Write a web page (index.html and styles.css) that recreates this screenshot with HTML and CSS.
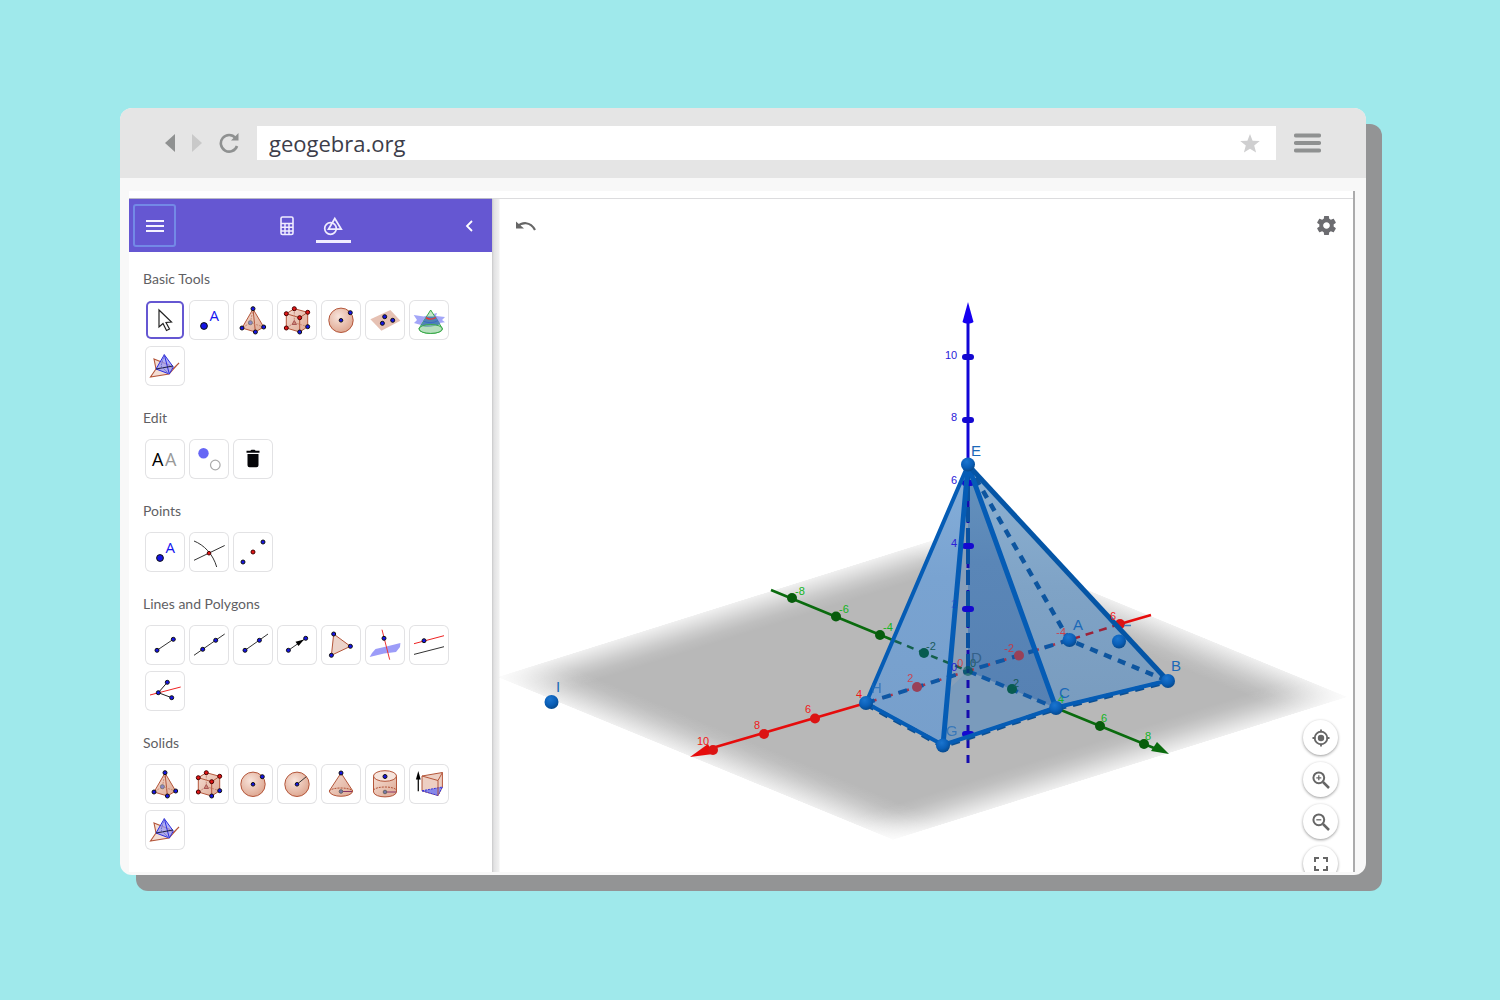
FILE: index.html
```html
<!DOCTYPE html>
<html lang="en">
<head>
<meta charset="utf-8">
<title>geogebra.org</title>
<meta name="viewport" content="width=device-width, initial-scale=1">
<link rel="stylesheet" href="styles.css">
</head>
<body>
<svg class="defs" width="0" height="0" aria-hidden="true">
  <defs>
    <linearGradient id="skin" x1="0" y1="0" x2="1" y2="1"><stop offset="0" stop-color="#f5ddd2"/><stop offset="1" stop-color="#dda893"/></linearGradient>
    <radialGradient id="ball" cx=".4" cy=".35" r=".65"><stop offset="0" stop-color="#f8e4db"/><stop offset="1" stop-color="#dfa993"/></radialGradient>
    <symbol id="i-move" viewBox="0 0 38 38"><path d="M13 9v17l4-3.500 3.500 7 3-1.500L20 21.500l5.500-.5z" fill="#fff" stroke="#222" stroke-width="1.200"/></symbol>
    <symbol id="i-point" viewBox="0 0 38 38"><circle class="b" cx="14" cy="25" r="3.400"/><text x="19.500" y="19.500" class="pt-a">A</text></symbol>
    <symbol id="i-pyramid" viewBox="0 0 38 38"><path d="M19 8L8 27l13.400 4 8.300-5z" fill="url(#skin)" stroke="#b4563a"/><path d="M19 8l2.400 23" stroke="#b4563a" fill="none"/><path d="M19 8l-2.600 13.700L8 27m8.400-5.300L29.700 26" stroke="#c98a75" fill="none" stroke-dasharray="2 1"/><circle cx="16.400" cy="21.700" r="2" fill="#8d86c8" stroke="#777"/><g class="b"><circle cx="19" cy="7.700" r="2"/><circle cx="8" cy="27" r="2"/><circle cx="21.400" cy="31" r="2"/><circle cx="29.700" cy="26" r="2"/></g></symbol>
    <symbol id="i-cube" viewBox="0 0 38 38"><path d="M8.300 12.700l8-5 13.400 3.600v14.400l-8 5.300-13.400-4z" fill="url(#skin)" stroke="#b4563a"/><path d="M8.300 12.700l13.400 4 8-5.400M21.700 16.700V31" fill="none" stroke="#b4563a"/><path d="M16.300 7.700v14l-8 5.300m8-5.300l13.400 4" fill="none" stroke="#c98a75" stroke-dasharray="2 1"/><path d="M16.300 19.500l2.200 4h-4.400z" fill="#c98a75" stroke="#a55"/><g class="r"><circle cx="16.300" cy="7.700" r="2"/><circle cx="8.300" cy="12.700" r="2"/><circle cx="29.700" cy="11.300" r="2"/><circle cx="21.700" cy="16.700" r="2"/><circle cx="8.300" cy="27" r="2"/></g><g class="b"><circle cx="29.700" cy="25.700" r="2"/><circle cx="21.700" cy="31" r="2"/></g></symbol>
    <symbol id="i-sphere" viewBox="0 0 38 38"><circle cx="19" cy="19.300" r="12.200" fill="url(#ball)" stroke="#b4563a"/><g class="b"><circle cx="19" cy="19.300" r="1.800"/><circle cx="28.300" cy="11.700" r="2"/></g></symbol>
    <symbol id="i-radius" viewBox="0 0 38 38"><circle cx="19" cy="19.300" r="12.200" fill="url(#ball)" stroke="#b4563a"/><path d="M19 19.300l9.300-7.600" stroke="#333"/><circle class="b" cx="19" cy="19.300" r="1.800"/></symbol>
    <symbol id="i-plane" viewBox="0 0 38 38"><path d="M4.400 18.300l20-9.300 10 10.700-19 10z" fill="#e6c1b3"/><g class="b"><circle cx="18.700" cy="15.700" r="2"/><circle cx="26.700" cy="19.300" r="2"/><circle cx="16.400" cy="22.300" r="2"/></g></symbol>
    <symbol id="i-section" viewBox="0 0 38 38"><path d="M3.700 14l10 1.500L27 12l-1 3 9 1-3 3 3 2.200-9.700 1.300L13 27l-2-3-7-2 3-3z" fill="#a3a6f8"/><path d="M20.700 9L9 27.500c0 6.500 23.400 6.500 23.400 0z" fill="#c3e6c8" stroke="#3bab4b"/><path d="M16.500 15.500L11 24.500c6 3 13 1 19.300-1.500l-4.500-7.500z" fill="#4f83b4"/><path d="M13.500 20c5 2.500 10 2 14.500-.5" fill="none" stroke="#3a66c8"/><ellipse cx="20.700" cy="28" rx="11.700" ry="4.500" fill="#a9d8b2" fill-opacity=".5" stroke="#3bab4b"/><path d="M16 16.700c3 2 7 1.500 10-.2" fill="none" stroke="#e33" stroke-width="1.400"/></symbol>
    <symbol id="i-net" viewBox="0 0 38 38"><path d="M8 12l15 6 4 4 6-6-10 11-18.500 3L10 22z" fill="#f3ddd4" stroke="#b4563a" stroke-width="1.100"/><path d="M18.300 7.700L10 22l13.300 5 4-7z" fill="#9898f2" fill-opacity=".75" stroke="#2b2be0"/><path d="M18.300 7.700l5 19.300" stroke="#2b2be0"/><path d="M10 22l17-3" stroke="#224" stroke-width="1.200"/><path d="M18.300 7.700L15 19l8 8" stroke="#66c" fill="none" stroke-dasharray="2 1"/></symbol>
    <symbol id="i-labels" viewBox="0 0 38 38"><text x="6" y="25.500" class="aa">A</text><text x="19" y="25.500" class="aa dim">A</text></symbol>
    <symbol id="i-show" viewBox="0 0 38 38"><circle cx="13.500" cy="13.200" r="5.200" fill="#6666f5"/><circle cx="25.300" cy="25" r="4.800" fill="#fff" stroke="#aaa" stroke-width="1.200"/></symbol>
    <symbol id="i-trash" viewBox="0 0 38 38"><path d="M12.500 10.800h3.800l1.200-1h3l1.200 1h3.800v2h-13zM13.500 14h11v11.300a2 2 0 0 1-2 2h-7a2 2 0 0 1-2-2z" fill="#050508"/></symbol>
    <symbol id="i-intersect" viewBox="0 0 38 38"><path d="M4 8c10 4 19 13 22.700 26M4 27.300l30.700-14.800" fill="none" stroke="#333"/><circle class="r" cx="19" cy="20.200" r="1.800"/></symbol>
    <symbol id="i-mid" viewBox="0 0 38 38"><g class="b"><circle cx="9" cy="29" r="2"/><circle cx="29" cy="9" r="2"/></g><circle class="r" cx="19" cy="19" r="2"/></symbol>
    <symbol id="i-seg" viewBox="0 0 38 38"><path d="M11 24.300l16.300-11" stroke="#333"/><g class="b"><circle cx="11" cy="24.300" r="2"/><circle cx="27.300" cy="13.300" r="2"/></g></symbol>
    <symbol id="i-line" viewBox="0 0 38 38"><path d="M4 29.300L34.700 8" stroke="#333"/><g class="b"><circle cx="12.700" cy="23.300" r="2"/><circle cx="25.700" cy="14.300" r="2"/></g></symbol>
    <symbol id="i-ray" viewBox="0 0 38 38"><path d="M11 24.300L34 8" stroke="#333"/><g class="b"><circle cx="11" cy="24.300" r="2"/><circle cx="25.400" cy="14.300" r="2"/></g></symbol>
    <symbol id="i-vector" viewBox="0 0 38 38"><path d="M10.400 24.300l17.300-12" stroke="#333"/><path d="M26 13.500l-8.500 2.300 3 4.200z"/><g class="b"><circle cx="10.400" cy="24.300" r="2"/><circle cx="27.700" cy="12.300" r="2"/></g></symbol>
    <symbol id="i-poly" viewBox="0 0 38 38"><path d="M11.700 8l16.700 12.300-19 9z" fill="#ecd3c9" stroke="#b4563a"/><g class="b"><circle cx="11.700" cy="8" r="2"/><circle cx="28.400" cy="20.300" r="2"/><circle cx="9.400" cy="29.300" r="2"/></g></symbol>
    <symbol id="i-perp" viewBox="0 0 38 38"><path d="M3.700 31l2.300-4 3.500-4 11-2.500L34.400 17l-.4 4-4 5-12 1.500z" fill="#9c9cf8"/><path d="M16 3.700l7.700 30" stroke="#e33"/><circle class="b" cx="18" cy="12.300" r="2"/></symbol>
    <symbol id="i-parallel" viewBox="0 0 38 38"><path d="M4 17.700l30-8" stroke="#e22"/><path d="M4 28.400l30-7.700" stroke="#333"/><circle class="b" cx="14" cy="14.700" r="2"/></symbol>
    <symbol id="i-bisect" viewBox="0 0 38 38"><path d="M4 23l30.700-8" stroke="#e22"/><path d="M21.300 10.300l-9 10.400 13.400 5" fill="none" stroke="#222"/><g class="b"><circle cx="12.300" cy="20.700" r="2"/><circle cx="21.300" cy="10.300" r="2"/><circle cx="25.700" cy="25.700" r="2"/></g></symbol>
    <symbol id="i-cone" viewBox="0 0 38 38"><path d="M19 8L7.200 26c1 7 22.600 7 23.600 0z" fill="url(#skin)" stroke="#b4563a"/><path d="M7.200 26c3-4 20-4 23.600 0" fill="none" stroke="#b4563a" stroke-dasharray="2 1"/><path d="M19 26.500h11" stroke="#836"/><circle cx="19" cy="26.500" r="1.800" fill="#77a" stroke="#666"/><circle class="b" cx="19" cy="8" r="2"/></symbol>
    <symbol id="i-cyl" viewBox="0 0 38 38"><path d="M7.500 11v16c1 6.500 22 6.500 23 0V11z" fill="url(#skin)" stroke="#b4563a"/><ellipse cx="19" cy="11" rx="11.500" ry="5.300" fill="#f6e4dc" stroke="#b4563a"/><path d="M7.500 25c3-4 20-4 23 0" fill="none" stroke="#b4563a" stroke-dasharray="2 1"/><path d="M19 27h11" stroke="#836"/><circle cx="19" cy="27" r="1.800" fill="#77a" stroke="#666"/><circle class="b" cx="19" cy="11.500" r="2"/></symbol>
    <symbol id="i-extrude" viewBox="0 0 38 38"><path d="M8.300 26.200V12" stroke="#111" stroke-width="1.300"/><path d="M8.300 6l2.400 8.500H5.900z"/><path d="M12 11l20.400-3.500V22L28 30.500l-16-4.700z" fill="#edcfc3" stroke="#b4563a"/><path d="M12 25.800L32.400 22 28 30.500z" fill="#8787e8" stroke="#33d" stroke-dasharray="2 1"/><path d="M12 11l16 4.500 4.400-8M28 15.500v15" fill="none" stroke="#b4563a"/></symbol>
  </defs>
</svg>

<main class="window">
  <header class="chrome">
    <nav class="nav" aria-label="History">
      <button class="nav-btn" aria-label="Back"><svg width="10" height="18" viewBox="0 0 10 18"><path d="M10 0v18L0 9z" fill="#8f9191"/></svg></button>
      <button class="nav-btn" aria-label="Forward"><svg width="10" height="18" viewBox="0 0 10 18"><path d="M0 0v18l10-9z" fill="#c9c9c9"/></svg></button>
      <button class="nav-btn" aria-label="Reload"><svg width="20" height="20" viewBox="0 0 20 20"><path d="M16.500 5A8.300 8.300 0 1 0 18 13" fill="none" stroke="#8f9191" stroke-width="2.600"/><path d="M19.500 0v7.500H12z" fill="#8f9191"/></svg></button>
    </nav>
    <div class="address">
      <input class="url" type="text" value="geogebra.org" aria-label="Address">
      <button class="nav-btn" aria-label="Bookmark"><svg width="20" height="19" viewBox="0 0 20 19"><path d="M10 0l2.600 6.700 7.200.4-5.600 4.500 1.900 7L10 14.700l-6.100 3.900 1.900-7L.2 7.100l7.200-.4z" fill="#cfcfd0"/></svg></button>
    </div>
    <button class="nav-btn" aria-label="Browser menu"><svg width="27" height="20" viewBox="0 0 27 20"><path d="M2 2.500h23M2 10h23M2 17.500h23" stroke="#8f9191" stroke-width="4.200" stroke-linecap="round"/></svg></button>
  </header>

  <div class="page">
    <div class="app">
      <aside class="sidebar">
        <div class="tabs">
          <button class="menu" aria-label="Menu"><svg width="18" height="14" viewBox="0 0 18 14"><path d="M0 2h18M0 7h18M0 12h18" stroke="#f4f2ff" stroke-width="2"/></svg></button>
          <div class="tab-group">
            <button class="tab" aria-label="Algebra"><svg width="14" height="20" viewBox="0 0 14 20"><rect x="1" y="1" width="12" height="17.500" rx="1.500" fill="none" stroke="#f0edff" stroke-width="1.600"/><path d="M1 7.500h12M1 11.200h12M1 14.900h12M5 7.500v11M9 7.500v11" stroke="#f0edff" stroke-width="1.500"/></svg></button>
            <button class="tab active" aria-label="Tools"><svg width="20" height="20" viewBox="0 0 20 20"><g fill="none" stroke="#f0edff" stroke-width="1.700"><circle cx="7.500" cy="12.500" r="5.800"/><path d="M11.800 2.500l6.500 10.700H5.500z"/></g></svg></button>
          </div>
          <button class="collapse" aria-label="Collapse"><svg width="8" height="12" viewBox="0 0 8 12"><path d="M7 1L2 6l5 5" fill="none" stroke="#fff" stroke-width="1.800"/></svg></button>
        </div>
        <div class="sections">
          <section><h2>Basic Tools</h2><div class="tools">
            <button class="tool selected" aria-label="Move"><svg><use href="#i-move"/></svg></button>
            <button class="tool" aria-label="Point"><svg><use href="#i-point"/></svg></button>
            <button class="tool" aria-label="Pyramid"><svg><use href="#i-pyramid"/></svg></button>
            <button class="tool" aria-label="Cube"><svg><use href="#i-cube"/></svg></button>
            <button class="tool" aria-label="Sphere"><svg><use href="#i-sphere"/></svg></button>
            <button class="tool" aria-label="Plane"><svg><use href="#i-plane"/></svg></button>
            <button class="tool" aria-label="Intersect surfaces"><svg><use href="#i-section"/></svg></button>
            <button class="tool" aria-label="Net"><svg><use href="#i-net"/></svg></button>
          </div></section>
          <section><h2>Edit</h2><div class="tools">
            <button class="tool" aria-label="Show label"><svg><use href="#i-labels"/></svg></button>
            <button class="tool" aria-label="Show object"><svg><use href="#i-show"/></svg></button>
            <button class="tool" aria-label="Delete"><svg><use href="#i-trash"/></svg></button>
          </div></section>
          <section><h2>Points</h2><div class="tools">
            <button class="tool" aria-label="Point"><svg><use href="#i-point"/></svg></button>
            <button class="tool" aria-label="Intersect"><svg><use href="#i-intersect"/></svg></button>
            <button class="tool" aria-label="Midpoint"><svg><use href="#i-mid"/></svg></button>
          </div></section>
          <section><h2>Lines and Polygons</h2><div class="tools">
            <button class="tool" aria-label="Segment"><svg><use href="#i-seg"/></svg></button>
            <button class="tool" aria-label="Line"><svg><use href="#i-line"/></svg></button>
            <button class="tool" aria-label="Ray"><svg><use href="#i-ray"/></svg></button>
            <button class="tool" aria-label="Vector"><svg><use href="#i-vector"/></svg></button>
            <button class="tool" aria-label="Polygon"><svg><use href="#i-poly"/></svg></button>
            <button class="tool" aria-label="Perpendicular"><svg><use href="#i-perp"/></svg></button>
            <button class="tool" aria-label="Parallel"><svg><use href="#i-parallel"/></svg></button>
            <button class="tool" aria-label="Angle bisector"><svg><use href="#i-bisect"/></svg></button>
          </div></section>
          <section><h2>Solids</h2><div class="tools">
            <button class="tool" aria-label="Pyramid"><svg><use href="#i-pyramid"/></svg></button>
            <button class="tool" aria-label="Cube"><svg><use href="#i-cube"/></svg></button>
            <button class="tool" aria-label="Sphere through point"><svg><use href="#i-sphere"/></svg></button>
            <button class="tool" aria-label="Sphere with radius"><svg><use href="#i-radius"/></svg></button>
            <button class="tool" aria-label="Cone"><svg><use href="#i-cone"/></svg></button>
            <button class="tool" aria-label="Cylinder"><svg><use href="#i-cyl"/></svg></button>
            <button class="tool" aria-label="Extrude"><svg><use href="#i-extrude"/></svg></button>
            <button class="tool" aria-label="Net"><svg><use href="#i-net"/></svg></button>
          </div></section>
        </div>
      </aside>

      <div class="view">
        <svg class="scene" viewBox="498 199 855 673" preserveAspectRatio="xMidYMid slice" role="img" aria-label="Pyramid on a plane with three axes">
          <defs>
            <linearGradient id="fu"><stop offset="0" stop-color="#b8b8b8" stop-opacity=".2"/><stop offset=".06" stop-color="#b8b8b8" stop-opacity=".7"/><stop offset=".09" stop-color="#b8b8b8" stop-opacity=".9"/><stop offset=".12" stop-color="#b8b8b8"/><stop offset=".88" stop-color="#b8b8b8"/><stop offset=".91" stop-color="#b8b8b8" stop-opacity=".9"/><stop offset=".94" stop-color="#b8b8b8" stop-opacity=".7"/><stop offset="1" stop-color="#b8b8b8" stop-opacity=".2"/></linearGradient>
            <linearGradient id="fv" x1="0" y1="0" x2="0" y2="1"><stop offset="0" stop-color="#fff" stop-opacity=".2"/><stop offset=".06" stop-color="#fff" stop-opacity=".7"/><stop offset=".09" stop-color="#fff" stop-opacity=".9"/><stop offset=".12" stop-color="#fff"/><stop offset=".88" stop-color="#fff"/><stop offset=".91" stop-color="#fff" stop-opacity=".9"/><stop offset=".94" stop-color="#fff" stop-opacity=".7"/><stop offset="1" stop-color="#fff" stop-opacity=".2"/></linearGradient>
            <mask id="fade" maskUnits="userSpaceOnUse" x="0" y="0" width="100" height="100"><rect width="100" height="100" fill="url(#fv)"/></mask>
            <linearGradient id="left" x1="0" y1="0" x2="0" y2="1"><stop offset="0" stop-color="#86afd9"/><stop offset=".4" stop-color="#79a3d1"/><stop offset="1" stop-color="#779fcb"/></linearGradient>
            <linearGradient id="right" x1="0" y1="0" x2="0" y2="1"><stop offset="0" stop-color="#8db2d3"/><stop offset=".5" stop-color="#7fa3c6"/><stop offset="1" stop-color="#799cbf"/></linearGradient>
            <linearGradient id="dark" x1="0" y1="0" x2="0" y2="1"><stop offset="0" stop-color="#6693bd"/><stop offset=".4" stop-color="#5a86b7"/><stop offset="1" stop-color="#5681b3"/></linearGradient>
            <radialGradient id="pt" cx=".4" cy=".3" r=".7"><stop offset="0" stop-color="#1b75cf"/><stop offset=".6" stop-color="#0a5fb8"/><stop offset="1" stop-color="#064a8f"/></radialGradient>
          </defs>
          <g transform="matrix(4.550 -1.430 3.960 1.630 497 677)"><rect width="100" height="100" fill="url(#fu)" mask="url(#fade)"/></g>

          <path d="M968 465L866 703l77 42.500z" fill="url(#left)"/>
          <path d="M968 465l-25 280.500L1056 708z" fill="#7a9bbc"/>
          <path d="M968 465l-18 200-2 25 20-19z" fill="#879fb9"/>
          <path d="M968 465v206l88 37z" fill="url(#dark)"/>
          <path d="M968 465l88 243 112-27z" fill="url(#right)"/>

          <g fill="none">
            <path d="M707 749.500L866 703M1120 624l31-9" stroke="#e60c0c" stroke-width="2.500"/>
            <path d="M1120 624l-51 16" stroke="#9c2238" stroke-width="2.500" stroke-dasharray="8 6"/>
            <path d="M771 590l124 51M1056 708l98 40" stroke="#0a6b0e" stroke-width="2.500"/>
            <path d="M895 641l73 30" stroke="#14604c" stroke-width="2.500" stroke-dasharray="7 6"/>
            <path d="M866 703l102-32 101-31" stroke="#a8354a" stroke-width="2.500" stroke-dasharray="11 6"/>
            <path d="M866 703l102-32 101-31" stroke="#0e57a4" stroke-width="4" stroke-dasharray="9 8"/>
            <path d="M968 671l88 37" stroke="#0e57a4" stroke-width="4" stroke-dasharray="9 6"/>
            <path d="M968 465l101 175 99 41" stroke="#0d559f" stroke-width="4.500" stroke-dasharray="8 7"/>
            <path d="M968 320v145" stroke="#1206d6" stroke-width="3"/>
            <path d="M968 485v280" stroke="#150cae" stroke-width="3" stroke-dasharray="8 7"/>
            <path d="M968 465v206" stroke="#0a519f" stroke-width="4" stroke-dasharray="15 6"/>
          </g>
          <path d="M690 757l18-13 5 10z" fill="#e60c0c"/>
          <path d="M1169 754l-12-12-6 9z" fill="#0a6b0e"/>
          <path d="M968 302l5.500 20c-3 2-8 2-11 0z" fill="#1600f0"/>

          <g fill="#1408d0"><rect x="962" y="354" width="12" height="6" rx="3"/><rect x="962" y="417" width="12" height="6" rx="3"/><rect x="962" y="480" width="12" height="6" rx="3"/><rect x="962" y="543" width="12" height="6" rx="3"/><rect x="962" y="606" width="12" height="6" rx="3"/><rect x="962" y="731" width="12" height="6" rx="3"/></g>
          <g fill="#dc1414"><circle cx="713" cy="750" r="5"/><circle cx="764" cy="734" r="5"/><circle cx="815" cy="718.500" r="5"/><circle cx="1120" cy="624" r="5"/></g>
          <g fill="#994158"><circle cx="917" cy="687" r="5"/><circle cx="1019" cy="655.500" r="5"/></g>
          <g fill="#085c0c"><circle cx="792" cy="598" r="5"/><circle cx="836" cy="616.500" r="5"/><circle cx="880" cy="635" r="5"/><circle cx="1100" cy="726" r="5"/><circle cx="1144" cy="744" r="5"/></g>
          <g fill="#075b50"><circle cx="924" cy="653" r="5"/><circle cx="1012" cy="689" r="5"/><circle cx="968" cy="671" r="5" opacity=".6"/></g>

          <path d="M866 704l77 42 113-37.500 112-27" fill="none" stroke="#0d4f91" stroke-width="5" stroke-dasharray="9 7"/>
          <g fill="none" stroke="#055cb5" stroke-width="4" stroke-linejoin="round">
            <path d="M968 465L866 703l77 42 113-37.500 112-27"/>
            <path d="M968 465l-25 280M968 465l88 243" stroke-width="5"/>
            <path d="M968 465l200 216" stroke="#0455a6" stroke-width="5"/>
          </g>

          <g class="tick z"><text x="945" y="359">10</text><text x="951" y="421">8</text><text x="951" y="484">6</text><text x="951" y="547">4</text><text x="951" y="608" opacity=".3">2</text><text x="951" y="671">0</text></g>
          <g class="tick x"><text x="697" y="745">10</text><text x="754" y="729">8</text><text x="805" y="713">6</text><text x="856" y="698">4</text><text x="1110" y="620">6</text><g opacity=".7"><text x="907" y="682">2</text><text x="957" y="667">0</text><text x="1004" y="652">-2</text><text x="1056" y="636">-4</text></g></g>
          <g class="tick y"><text x="795" y="595">-8</text><text x="839" y="613">-6</text><text x="883" y="631">-4</text><text x="1058" y="703">4</text><text x="1101" y="722">6</text><text x="1145" y="740">8</text></g>
          <g class="tick far"><text x="926" y="650">-2</text><text x="970" y="667">0</text><text x="1013" y="687">2</text></g>

          <g fill="url(#pt)"><circle cx="968" cy="464.500" r="7"/><circle cx="866" cy="703" r="7"/><circle cx="943" cy="745.500" r="7"/><circle cx="1056" cy="708" r="7"/><circle cx="1168" cy="681" r="7"/><circle cx="1069.500" cy="640" r="7"/><circle cx="1119" cy="641.500" r="7"/><circle cx="551.500" cy="702" r="7"/></g>
          <g class="name"><text x="971" y="456">E</text><text x="1073" y="630">A</text><text x="1171" y="671">B</text><text x="1059" y="698">C</text><text x="556" y="692">I</text><g opacity=".7"><text x="871" y="693">H</text><text x="946" y="736">G</text></g><text x="971" y="663" class="deep">D</text></g>
          <path d="M1124 625.500h7" stroke="#3f7db8" stroke-width="1.500"/>
        </svg>
        <button class="ghost undo" aria-label="Undo"><svg width="22" height="12" viewBox="0 0 22 12"><path d="M2 7c5-5 13-6 18 3" fill="none" stroke="#666" stroke-width="2.200"/><path d="M1 1.500v7h8z" fill="#666"/></svg></button>
        <button class="ghost gear" aria-label="Settings"><svg width="23" height="23" viewBox="0 0 24 24"><path d="M19.430 12.980c.04-.32.07-.64.07-.98s-.03-.66-.07-.98l2.110-1.650c.19-.15.24-.42.12-.64l-2-3.460c-.12-.22-.39-.3-.61-.22l-2.490 1c-.52-.4-1.080-.73-1.690-.98l-.38-2.650C14.460 2.180 14.250 2 14 2h-4c-.25 0-.46.18-.49.42l-.38 2.650c-.61.25-1.170.59-1.690.98l-2.490-1c-.23-.09-.49 0-.61.22l-2 3.460c-.13.22-.07.49.12.64l2.110 1.650c-.04.32-.07.65-.07.98s.03.66.07.98l-2.110 1.650c-.19.15-.24.42-.12.64l2 3.460c.12.22.39.3.61.22l2.490-1c.52.4 1.080.73 1.690.98l.38 2.650c.03.24.24.42.49.42h4c.25 0 .46-.18.49-.42l.38-2.650c.61-.25 1.170-.59 1.690-.98l2.490 1c.23.09.49 0 .61-.22l2-3.460c.12-.22.07-.49-.12-.64zM12 15.500c-1.930 0-3.500-1.570-3.500-3.500s1.570-3.500 3.500-3.500 3.500 1.570 3.500 3.500-1.570 3.500-3.500 3.500z" fill="#6c6c70"/></svg></button>
        <div class="controls">
          <button class="round" aria-label="Standard view"><svg width="20" height="20" viewBox="0 0 20 20"><circle cx="10" cy="10" r="3.200" fill="#666"/><circle cx="10" cy="10" r="6.300" fill="none" stroke="#666" stroke-width="1.800"/><path d="M10 1.500v3M10 15.500v3M1.500 10h3M15.500 10h3" stroke="#666" stroke-width="1.800"/></svg></button>
          <button class="round" aria-label="Zoom in"><svg width="20" height="20" viewBox="0 0 20 20"><circle cx="7.800" cy="7.800" r="5.400" fill="none" stroke="#666" stroke-width="2"/><path d="M5.300 7.800h5M7.800 5.300v5" stroke="#666" stroke-width="1.300"/><path d="M12 12l6 6" stroke="#666" stroke-width="2.500"/></svg></button>
          <button class="round" aria-label="Zoom out"><svg width="20" height="20" viewBox="0 0 20 20"><circle cx="7.800" cy="7.800" r="5.400" fill="none" stroke="#666" stroke-width="2"/><path d="M5.300 7.800h5" stroke="#666" stroke-width="1.300"/><path d="M12 12l6 6" stroke="#666" stroke-width="2.500"/></svg></button>
          <button class="round" aria-label="Full screen"><svg width="20" height="20" viewBox="0 0 20 20"><path d="M4 8V4h4M12 4h4v4M16 12v4h-4M8 16H4v-4" fill="none" stroke="#666" stroke-width="2"/></svg></button>
        </div>
      </div>
    </div>
  </div>
</main>
</body>
</html>
```
FILE: styles.css
```css
* { box-sizing: border-box; }

body {
  margin: 0;
  height: 100vh;
  padding: 108px 134px 125px 120px;
  display: flex;
  background: #9fe9eb;
  font-family: Lato, "Noto Sans", sans-serif;
}

button {
  margin: 0;
  padding: 0;
  border: 0;
  background: none;
  font: inherit;
  cursor: pointer;
}

svg { display: block; }
.defs { position: absolute; }

.window {
  flex: 1;
  min-width: 0;
  display: flex;
  flex-direction: column;
  background: #f8f8f8;
  border-radius: 12px;
  box-shadow: 16px 16px 0 #939495;
  overflow: hidden;
}

/* browser bar */
.chrome {
  flex: none;
  height: 70px;
  padding: 0 45px;
  display: flex;
  align-items: center;
  gap: 18px;
  background: #e5e5e5;
}
.nav { display: flex; align-items: center; gap: 17px; }
.nav-btn { flex: none; }
.address {
  flex: 1;
  height: 34px;
  padding: 0 16px 0 12px;
  display: flex;
  align-items: center;
  background: #fff;
}
.url {
  flex: 1;
  min-width: 0;
  padding: 0;
  border: 0;
  outline: 0;
  background: none;
  color: #3d3d4a;
  font: 22px/32px "Open Sans", "Noto Sans", sans-serif;
}

/* page area */
.page {
  flex: 1;
  min-height: 0;
  padding: 13px 11px 3px 9px;
  display: flex;
}
.app {
  flex: 1;
  min-width: 0;
  display: flex;
  padding-top: 7px;
  background: #fff;
  border-right: 2px solid #ababac;
}

.sidebar {
  flex: none;
  width: 363px;
  border-top: 1px solid #b9b9c8;
  overflow: hidden;
}
.tabs {
  height: 53px;
  padding: 0 19px 0 4px;
  display: flex;
  align-items: center;
  justify-content: space-between;
  background: #6557d2;
}
.menu {
  width: 43px;
  height: 43px;
  display: grid;
  place-items: center;
  border: 2px solid #7389e6;
  border-radius: 3px;
}
.tab-group { display: flex; gap: 11px; padding-right: 21px; }
.tab {
  width: 35px;
  height: 35px;
  padding-top: 8px;
  display: flex;
  justify-content: center;
  border-bottom: 3px solid transparent;
}
.tab.active { border-color: #f0edff; }
.tab svg { flex: none; }

.sections {
  padding: 17px 14px;
  display: flex;
  flex-direction: column;
  gap: 23px;
}
h2 {
  margin: 0 0 12px;
  color: #5f5f64;
  font-size: 14px;
  line-height: 20px;
  font-weight: 400;
}
.tools {
  display: flex;
  flex-wrap: wrap;
  gap: 8px 6px;
  padding: 0 3px;
}
.tool {
  width: 38px;
  height: 38px;
  border-radius: 5px;
  background: #fff;
  box-shadow: 0 0 0 1px #e2e2e4;
}
.tool svg { width: 38px; height: 38px; fill: #000; }
.tool.selected { box-shadow: inset 0 0 0 2px #6557d2; }

.b { fill: #1414e6; stroke: #111; }
.r { fill: #e01515; stroke: #400; }
.pt-a { font: 15px "Open Sans", sans-serif; fill: #1414f0; }
.aa { font: 18px "Open Sans", sans-serif; fill: #000; }
.aa.dim { fill: #999; }

/* 3D view */
.view {
  flex: 1;
  min-width: 0;
  position: relative;
  overflow: hidden;
  padding-left: 6px;
  border-top: 1px solid #dcdcde;
  background: linear-gradient(90deg, #c9c9ca, #e2e2e3 2px, #f0f0f0 7px, #fff 8px);
}
.scene { width: 100%; height: 100%; }
.tick { font: 11px "Liberation Sans", Arial, sans-serif; }
.tick.z { fill: #2a20d8; }
.tick.x { fill: #f01818; }
.tick.y { fill: #12b522; }
.tick.far { fill: #185a5a; }
.name { font: 15px "Liberation Sans", Arial, sans-serif; fill: #1b69b8; }
.deep { fill: #34618a; }

.ghost { position: absolute; }
.undo { top: 21px; left: 23px; }
.gear { top: 15px; right: 15px; }
.controls {
  position: absolute;
  right: 15px;
  bottom: -9px;
  display: flex;
  flex-direction: column;
  gap: 7px;
}
.round {
  width: 35px;
  height: 35px;
  display: grid;
  place-items: center;
  border-radius: 50%;
  background: #fff;
  box-shadow: 0 1px 3px #0006;
}
```
